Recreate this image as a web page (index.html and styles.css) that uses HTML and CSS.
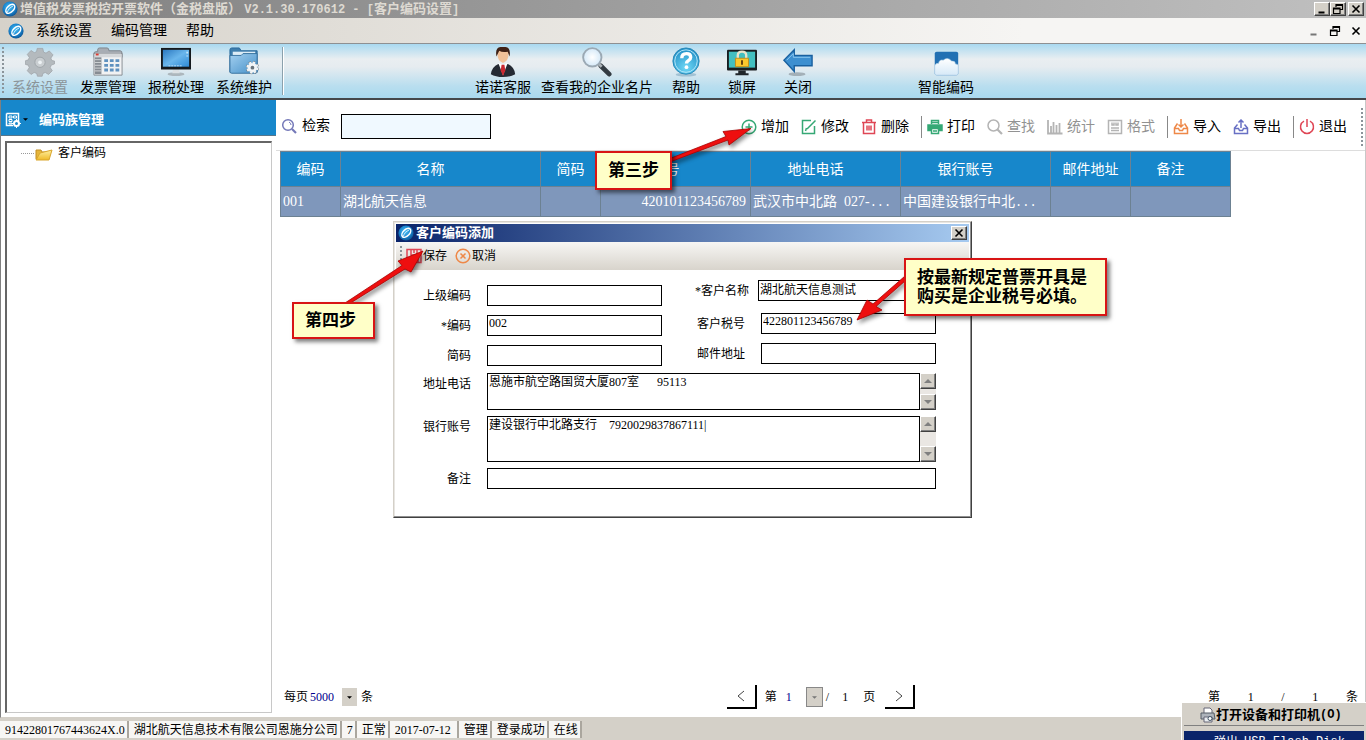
FILE: index.html
```html
<!DOCTYPE html>
<html lang="zh-CN">
<head>
<meta charset="utf-8">
<title>增值税发票税控开票软件（金税盘版）</title>
<link rel="stylesheet" href="styles.css">
</head>
<body>
<svg class="defs" aria-hidden="true">
  <defs>
    <radialGradient id="orb" cx="45%" cy="40%" r="60%"><stop offset="0" stop-color="#4cc0f4"/><stop offset=".6" stop-color="#1a86cf"/><stop offset="1" stop-color="#0f5797"/></radialGradient>
    <radialGradient id="help" cx="50%" cy="75%" r="75%"><stop offset="0" stop-color="#6fd8f6"/><stop offset="1" stop-color="#1e8cc4"/></radialGradient>
    <linearGradient id="screen" x1="0" y1="0" x2="1" y2="1"><stop offset="0" stop-color="#2a78c0"/><stop offset=".5" stop-color="#6ab6ec"/><stop offset="1" stop-color="#2f8ad6"/></linearGradient>
    <linearGradient id="folder" x1="0" y1="0" x2="1" y2="1"><stop offset="0" stop-color="#a4d0f0"/><stop offset="1" stop-color="#4590c8"/></linearGradient>
    <linearGradient id="yellow" x1="0" y1="0" x2="0" y2="1"><stop offset="0" stop-color="#fff0a0"/><stop offset="1" stop-color="#efb928"/></linearGradient>
    <linearGradient id="mist" x1="0" y1="0" x2="0" y2="1"><stop offset="0" stop-color="#fff"/><stop offset="1" stop-color="#d6e9f7"/></linearGradient>
    <radialGradient id="lens"><stop offset="0" stop-color="#fff"/><stop offset="1" stop-color="#d5e9f8"/></radialGradient>
    <symbol id="logo" viewBox="0 0 16 16"><circle cx="8" cy="8" r="7.6" fill="url(#orb)"/><ellipse cx="8.300" cy="7.800" rx="5.400" ry="3.200" transform="rotate(-45 8.300 7.800)" fill="none" stroke="#fff" stroke-width="1.500"/><path d="M5.500 11C6 8.500 8.300 6.300 11 5" fill="none" stroke="#d8f2ff"/></symbol>
    <symbol id="restore" viewBox="0 0 12 12"><path d="M4 1.500h6.500v5H8.500M4 1v3M4 2.500h6.500M1.500 5h6.500v5.500H1.500zM1.500 6h6.500" fill="none" stroke="#000" stroke-width="1.200"/></symbol>
    <symbol id="cross" viewBox="0 0 12 12"><path d="M2.500 2.500l7 7M9.500 2.500l-7 7" stroke="#000" stroke-width="1.600"/></symbol>
    <symbol id="minimize" viewBox="0 0 12 12"><path d="M2.500 9.500h6" stroke="currentColor" stroke-width="2"/></symbol>
    <symbol id="down" viewBox="0 0 8 4"><path d="M0 0h8L4 4z" fill="currentColor"/></symbol>
    <symbol id="up" viewBox="0 0 8 4"><path d="M0 4h8L4 0z" fill="currentColor"/></symbol>
    <symbol id="gear" viewBox="0 0 32 32"><path d="M13 1.500h6l.8 4 2.600 1 3.500-2.300 4 4.200-2.300 3.400 1 2.600 2.900.6v3l-3.500 1.300-1.100 2.700 2.200 3.300-4 4-3.500-2.100-2.500 1-.8 3h-5l-.9-3-2.700-1-3.300 2.100-4-4L4.500 22l-1-2.600-3-.8v-4l3-.9 1.100-2.600-2.200-3.200 4-4.200 3.500 2.300 2.400-1z" fill="#b4babe" stroke="#989ea2" stroke-width=".7"/><circle cx="16" cy="16.300" r="5.500" fill="#c9ced1" stroke="#9da3a7"/><circle cx="16" cy="16.300" r="2" fill="#edf2f4"/></symbol>
  </defs>
</svg>

<div class="app">
  <header class="titlebar">
    <svg class="logo"><use href="#logo"/></svg>
    <h1 class="titlebar-text">增值税发票税控开票软件（金税盘版） <span class="mono">V2.1.30.170612 - [</span>客户编码设置<span class="mono">]</span></h1>
    <div class="win-buttons">
      <button class="bevel" aria-label="最小化"><svg><use href="#minimize"/></svg></button>
      <button class="bevel" aria-label="还原"><svg><use href="#restore"/></svg></button>
      <button class="bevel last" aria-label="关闭"><svg><use href="#cross"/></svg></button>
    </div>
  </header>

  <nav class="menubar">
    <svg class="logo"><use href="#logo"/></svg>
    <button>系统设置</button><button>编码管理</button><button>帮助</button>
    <div class="mdi-buttons">
      <button class="dim" aria-label="最小化子窗口"><svg><use href="#minimize"/></svg></button>
      <button aria-label="还原子窗口"><svg><use href="#restore"/></svg></button>
      <button aria-label="关闭子窗口"><svg><use href="#cross"/></svg></button>
    </div>
  </nav>

  <div class="ribbon">
    <span class="grip"></span>
    <div class="ribbon-group modules">
      <button disabled><svg><use href="#gear"/></svg>系统设置</button>
      <button><svg viewBox="0 0 32 32"><path d="M5 5V3q0-2 2-2h8q2 0 2 3h12q2 0 2 3v4H1V7q0-2 2-2z" fill="#a8adb4" stroke="#7d838b"/><path d="M1 7h30v23H1z" fill="#f1f2f3" stroke="#858a90"/><path d="M2 7h28v4H2z" fill="#d4d7da"/><path d="M3 7h3v2H3z" fill="#dd3b31"/><path d="M2 11h7v18H2z" fill="#878c93"/><path d="M2 13.500h7M2 16.500h7M2 19.500h7M2 22.500h7M2 25.500h7" stroke="#d4d7da"/><path d="M12 13h4v3h-4zm6 0h4v3h-4zm6 0h4v3h-4zM12 18h4v3h-4zm6 0h4v3h-4zm6 0h4v3h-4zM12 23h4v3h-4zm6 0h4v3h-4zm6 0h4v3h-4z" fill="#5f91bf"/></svg>发票管理</button>
      <button><svg viewBox="0 0 32 32"><ellipse cx="16" cy="29" rx="9" ry="2" fill="#adb7bd"/><path d="M13 23h6l1 5h-8z" fill="#dce1e4"/><path d="M0 1h32v23H0z" fill="#15191d"/><path d="M2 3h28v18H2z" fill="url(#screen)"/><path d="M27 5h2v2h-2zM27 9h2v1h-2z" fill="#c5e6fa"/><path d="M8 20h15" stroke="#b6dcf6" stroke-dasharray="2 1"/></svg>报税处理</button>
      <button><svg viewBox="0 0 32 32"><path d="M1 8V3q0-2 2-2h8l2 3h17v23H1z" fill="#3f7ead" stroke="#25669b"/><path d="M4 5h24v5H4z" fill="#dcecf6"/><path d="M1 9h12l2-2h15v19q0 2-2 2H3q-2 0-2-2z" fill="url(#folder)" stroke="#36719e"/><circle cx="25" cy="22" r="5.500" fill="none" stroke="#6d767c" stroke-width="3" stroke-dasharray="2.400 1.900"/><circle cx="25" cy="22" r="4.800" fill="#f2f5f7" stroke="#f2f5f7" stroke-width="1"/><circle cx="25" cy="22" r="5.500" fill="none" stroke="#f2f5f7" stroke-width="2" stroke-dasharray="2.400 1.900"/><circle cx="25" cy="22" r="2" fill="#68737b"/></svg>系统维护</button>
    </div>
    <span class="ribbon-line"></span>
    <div class="ribbon-group service">
      <button><svg viewBox="0 0 32 32"><path d="M10 7q0-7 6-7t6 7q0 8-6 10-6-2-6-10z" fill="#f2c198"/><path d="M9 10Q7-1 16 0q9-1 7 10l-2-5q-6 1-9-1z" fill="#3f2116"/><path d="M3 29q1-8 8-11l5 2 5-2q7 3 8 11-5 3-13 3T3 29z" fill="#252a33"/><path d="M11 17l5 13 5-13-5 2z" fill="#fff"/><path d="M14.500 19h3l1 6-2.500 6-2.500-6z" fill="#c92830"/></svg>诺诺客服</button>
      <button><svg viewBox="0 0 32 32"><path d="M20 20l9 9" stroke="#333b42" stroke-width="5" stroke-linecap="round"/><path d="M17 17l4 4" stroke="#adb4b9" stroke-width="3"/><circle cx="11" cy="11" r="9.800" fill="url(#lens)" stroke="#9ba9b4" stroke-width="2"/></svg>查看我的企业名片</button>
    </div>
    <div class="ribbon-group actions">
      <button><svg viewBox="0 0 32 32"><ellipse cx="16" cy="29.500" rx="11" ry="2" fill="#719eb8" opacity=".5"/><circle cx="16" cy="15" r="14" fill="url(#help)" stroke="#2588b7"/><circle cx="16" cy="15" r="12" fill="none" stroke="#b9e9fa"/><path d="M11.500 12q0-5 5-5 4.500 0 4.500 4 0 2-2.500 3.500-2 1.200-2 3" fill="none" stroke="#fff" stroke-width="3.600"/><circle cx="16.500" cy="21.500" r="2" fill="#fff"/></svg>帮助</button>
      <button><svg viewBox="0 0 32 32"><path d="M12 25h8v3h3v2H9v-2h3z" fill="#20252a"/><rect x="0" y="3" width="32" height="22" rx="1" fill="#181d20"/><path d="M2 5h28v17H2z" fill="#43bfc0"/><path d="M11.500 13V9q0-4 4.500-4t4.500 4v4" fill="none" stroke="#e8e4ca" stroke-width="2.500"/><path d="M9 12h14v9H9z" fill="#fac82d" stroke="#c48b15"/><path d="M15 14h2v5h-2z" fill="#5b3b0e"/></svg>锁屏</button>
      <button><svg viewBox="0 0 32 32"><ellipse cx="15" cy="29" rx="9" ry="2" fill="#8f999f" opacity=".7"/><path d="M1 14L12 3v6h19v11H12v6z" fill="#3d8fd0" stroke="#19609f" stroke-width="1.500"/><path d="M4 14l7-7v4h18" fill="none" stroke="#8cc7f0"/></svg>关闭</button>
    </div>
    <div class="ribbon-group cloud">
      <button><svg viewBox="0 0 32 32"><rect x="4" y="5" width="25" height="25" rx="2" fill="#2270b3"/><path d="M4 28v-8q1-3 4-2.500 1-4.500 5-3.500 5-4 9 1 4-.5 4 3 3 0 3 2v8q0 2-2 2H6q-2 0-2-2z" fill="url(#mist)" stroke="#a9cce4" stroke-width=".6"/></svg>智能编码</button>
    </div>
  </div>

  <div class="workspace">
    <aside class="sidebar">
      <div class="sidebar-head">
        <svg class="book" viewBox="0 0 16 16"><path d="M1.500 1.500h12V9M8 13.500H1.500v-12" fill="none" stroke="#fff" stroke-width="1.500"/><path d="M4 4h3v2H4zm4.500 0h3v2h-3zM4 7.500h3v2H4zM4 11h3v1H4z" fill="none" stroke="#fff"/><circle cx="11.500" cy="11.500" r="2.500" fill="none" stroke="#fff" stroke-width="2"/><path d="M11.500 7v9M7 11.500h9" stroke="#fff" stroke-dasharray="2 5"/></svg>
        <svg class="caret"><use href="#down"/></svg>
        <h2>编码族管理</h2>
      </div>
      <div class="tree">
        <span class="tree-line"></span>
        <svg viewBox="0 0 18 14"><path d="M1 12V3h5l1 2h7v3z" fill="#e5b53b" stroke="#c18e24"/><path d="M1 13L5 6l12-3-3 10z" fill="url(#yellow)" stroke="#d9a62d"/></svg>
        <span>客户编码</span>
      </div>
    </aside>

    <main class="content">
      <div class="toolbar">
        <label class="search"><svg class="icon violet" viewBox="0 0 16 16"><circle cx="7" cy="7" r="5.300"/><path d="M11 11l4 4" stroke-width="2.200"/><path d="M8 4q2 1 2 3" stroke-width="1"/></svg>检索<input type="text" class="search-input"></label>
        <div class="tools">
          <button><svg class="icon green" viewBox="0 0 16 16"><circle cx="8" cy="8" r="6.800"/><path d="M4.500 8h7M8 4.500v7"/></svg>增加</button>
          <button><svg class="icon green" viewBox="0 0 16 16"><path d="M10 1.500H1.500v13h12V7M6 10l8.500-8.500M4.500 12l1-3"/></svg>修改</button>
          <button><svg class="icon red" viewBox="0 0 16 16"><path d="M1 3.500h14M5.500 3V1h5v2M2.500 4v10.500h11V4M6 6.500v5M8 6.500v5M10 6.500v5"/></svg>删除</button>
          <span class="tool-line"></span>
          <button><svg class="icon green" viewBox="0 0 16 16"><path d="M4.500 5V1.500h7V5M4.500 3.500h7"/><path d="M1 6h14v5.500h-3V9H4v2.500H1z" fill="currentColor"/><path d="M4.500 9.500h7v5h-7zM6 12h4"/></svg>打印</button>
          <button disabled><svg class="icon" viewBox="0 0 16 16"><circle cx="6.500" cy="6.500" r="5.500"/><path d="M10.500 10.500l4.500 4.500" stroke-width="2.200"/></svg>查找</button>
          <button disabled><svg class="icon" viewBox="0 0 16 16"><path d="M1 1v13.500h14.500M4 14V7M6.500 14V3M9.500 14V6M12.500 14V4" stroke-width="1.800"/></svg>统计</button>
          <button disabled><svg class="icon" viewBox="0 0 16 16"><path d="M1.500 1.500h13v13h-13zM4 9h8M4 11.500h8M5 3.500V6h2V3.500M9 3.500V6h2V3.500"/></svg>格式</button>
          <span class="tool-line"></span>
          <button><svg class="icon orange" viewBox="0 0 16 16"><path d="M4.500 4.500L1.500 9v5.500h13V9l-3-4.500M1.500 9.500h4l1 2h3l1-2h4M8 0v8M5.500 5.500L8 8l2.500-2.500"/></svg>导入</button>
          <button><svg class="icon blue" viewBox="0 0 16 16"><path d="M4.500 5.500L1.500 9v5.500h13V9l-3-3.500M1.500 9.500h4l1 2h3l1-2h4M8 9V1M5.500 3.500L8 1l2.500 2.500"/></svg>导出</button>
          <span class="tool-line"></span>
          <button><svg class="icon red" viewBox="0 0 16 16"><path d="M5 2.200a6.500 6.500 0 1 0 6 0M8 0v8"/></svg>退出</button>
          <span class="grip"></span>
        </div>
      </div>

      <table class="grid">
        <colgroup><col class="w60"><col class="w200"><col class="w60"><col class="w150"><col class="w150"><col class="w150"><col class="w80"><col class="w100"></colgroup>
        <thead><tr><th>编码</th><th class="sortable">名称</th><th>简码</th><th class="sortable">税号</th><th class="sortable">地址电话</th><th class="sortable">银行账号</th><th>邮件地址</th><th class="sortable">备注</th></tr></thead>
        <tbody><tr><td>001</td><td>湖北航天信息</td><td></td><td class="right">420101123456789</td><td>武汉市中北路&ensp;027-<span class="dots">...</span></td><td>中国建设银行中北<span class="dots">...</span></td><td></td><td></td></tr></tbody>
      </table>

      <footer class="pager">
        <div class="page-size"><label for="size">每页</label><select id="size"><option>5000</option></select><span class="drop"><svg><use href="#down"/></svg></span><span>条</span></div>
        <div class="page-nav">
          <button aria-label="上一页"><svg viewBox="0 0 8 12"><path d="M7 1L1 6l6 5"/></svg></button>
          <label for="page">第</label>
          <select id="page"><option>1</option></select>
          <span class="drop framed"><svg><use href="#down"/></svg></span>
          <span>/</span><span class="total">1</span><span>页</span>
          <button class="next" aria-label="下一页"><svg viewBox="0 0 8 12"><path d="M1 1l6 5-6 5"/></svg></button>
        </div>
        <div class="page-count"><span>第</span><span>1</span><span>/</span><span>1</span><span>条</span></div>
      </footer>
    </main>
  </div>

  <footer class="statusbar">
    <span>91422801767443624X.0</span><span>湖北航天信息技术有限公司恩施分公司</span><span>7</span><span>正常</span><span class="date">2017-07-12</span><span>管理</span><span>登录成功</span><span>在线</span>
  </footer>
</div>

<section class="dialog" role="dialog" aria-labelledby="dlg-title">
  <div class="dialog-title">
    <svg class="logo"><use href="#logo"/></svg>
    <h2 id="dlg-title">客户编码添加</h2>
    <button class="bevel" aria-label="关闭"><svg><use href="#cross"/></svg></button>
  </div>
  <div class="dialog-tools">
    <span class="grip"></span>
    <button><svg class="icon red" viewBox="0 0 16 16"><path d="M1 1.500h14v13H3L1 12zM5 2v5h6V2M8 2v3M4 14v-4h8v4"/></svg>保存</button>
    <button><svg class="icon orange" viewBox="0 0 16 16"><circle cx="8" cy="8" r="6.800"/><path d="M5.500 5.500l5 5M10.500 5.500l-5 5"/></svg>取消</button>
  </div>
  <form class="form">
    <div class="form-columns">
      <div class="form-column">
        <div class="field"><label for="parent">上级编码</label><input id="parent" type="text"></div>
        <div class="field"><label for="code">*编码</label><input id="code" type="text" value="002"></div>
        <div class="field"><label for="short">简码</label><input id="short" type="text"></div>
      </div>
      <div class="form-column second">
        <div class="field name"><label for="name">*客户名称</label><input id="name" type="text" value="湖北航天信息测试"></div>
        <div class="field"><label for="tax">客户税号</label><input id="tax" type="text" value="422801123456789"></div>
        <div class="field"><label for="mail">邮件地址</label><input id="mail" type="text"></div>
      </div>
    </div>
    <div class="field wide">
      <label for="addr">地址电话</label>
      <textarea id="addr" rows="2">恩施市航空路国贸大厦807室&ensp;&ensp;&ensp;95113</textarea>
      <div class="scroll"><button type="button" class="bevel" aria-label="向上"><svg><use href="#up"/></svg></button><button type="button" class="bevel" aria-label="向下"><svg><use href="#down"/></svg></button></div>
    </div>
    <div class="field wide tall">
      <label for="bank">银行账号</label>
      <textarea id="bank" rows="3">建设银行中北路支行&ensp;&ensp;7920029837867111|</textarea>
      <div class="scroll"><button type="button" class="bevel" aria-label="向上"><svg><use href="#up"/></svg></button><button type="button" class="bevel" aria-label="向下"><svg><use href="#down"/></svg></button></div>
    </div>
    <div class="field wide"><label for="note">备注</label><input id="note" type="text"></div>
  </form>
</section>

<svg class="arrows" width="1120" height="340" viewBox="0 0 1120 340" aria-hidden="true">
  <g fill="#ee0f0f" stroke="#a80000" stroke-width=".8">
    <path d="M670 158.500L726 136.500 723 131.500 751 128.500 729 145 728 140 670 162z"/>
    <path d="M345 303L402 265.500 398 261 423 251 411 272 405 269 349 304z"/>
    <path d="M905 276L873 304 867 300 857 320 882 310 876 306.500 905 281z"/>
  </g>
</svg>
<div class="callout step-three">第三步</div>
<div class="callout step-four">第四步</div>
<div class="callout tax-note">按最新规定普票开具是<br>购买是企业税号必填。</div>

<div class="popup">
  <button class="popup-item"><svg viewBox="0 0 16 16"><path d="M4 6V1h6l2 2v3" fill="#fff" stroke="#667"/><path d="M1 6h13l1 6H1z" fill="#aeb4bb" stroke="#555d66"/><path d="M4 10h8v5H4z" fill="#e9edf0" stroke="#667"/><circle cx="10" cy="11.500" r="2" fill="#fff" stroke="#456"/></svg>打开设备和打印机<span class="mono">(O)</span></button>
  <button class="popup-item active">弹出&ensp;<span class="device">USB Flash Disk</span></button>
</div>
</body>
</html>
```
FILE: styles.css
```css
* { box-sizing: border-box; }
body {
  margin: 0;
  height: 100vh;
  overflow: hidden;
  position: relative;
  background: #fff;
  color: #000;
  font: 12px/16px "Liberation Serif", "Noto Sans CJK SC", serif;
}
button, input, select, textarea { font: inherit; color: inherit; }
button { margin: 0; padding: 0; border: 0; background: none; white-space: nowrap; }
input, textarea { border: 1px solid #000; border-radius: 0; background: #fff; }
h1, h2 { margin: 0; }
svg { display: block; flex: none; }
.defs { position: absolute; width: 0; height: 0; }
.mono { font-family: "Liberation Mono", monospace; }
.logo { width: 16px; height: 16px; }
.app { display: flex; flex-direction: column; height: 100%; }

.bevel {
  display: flex;
  align-items: center;
  justify-content: center;
  width: 16px;
  height: 14px;
  background: #d4d0c8;
  border: 1px solid;
  border-color: #fff #404040 #404040 #fff;
  box-shadow: inset -1px -1px #808080;
}
.bevel svg { width: 12px; height: 12px; }

.titlebar {
  display: flex;
  align-items: center;
  gap: 2px;
  height: 18px;
  padding: 0 2px;
  background: linear-gradient(90deg, #808080, #c0c0c0);
}
.titlebar-text { font-size: 13px; line-height: 18px; color: #dedad2; white-space: nowrap; }
.titlebar-text .mono { font-size: 12px; }
.win-buttons { display: flex; margin-left: auto; }
.win-buttons .last { margin-left: 2px; }

.menubar {
  display: flex;
  align-items: center;
  gap: 19px;
  height: 26px;
  padding: 1px 4px 0 8px;
  font-size: 14px;
  background: linear-gradient(90deg, #d6d2ca, #f6f5f3 75%);
  border-bottom: 1px solid #8e9092;
}
.menubar .logo { margin-right: -7px; }
.mdi-buttons { display: flex; gap: 9px; margin-left: auto; }
.mdi-buttons svg { width: 12px; height: 12px; }
.mdi-buttons .dim { color: #777; }

.grip { width: 2px; align-self: stretch; background: repeating-linear-gradient(#8b949a 0 2px, transparent 2px 4px); }
.ribbon {
  display: flex;
  align-items: stretch;
  height: 56px;
  padding: 3px 2px;
  font-size: 14px;
  background: linear-gradient(#a9d9f0, #e9eef1 28%, #e6ecf0 42%, #b9deef 78%, #a9d9ef);
  border-bottom: 2px solid #45484b;
}
.ribbon-group { display: flex; }
.ribbon-group button { display: flex; flex-direction: column; align-items: center; line-height: 20px; }
.ribbon-group svg { width: 30px; height: 30px; margin-bottom: 1px; }
.ribbon-group button:disabled { color: #8b9499; }
.modules { gap: 12px; margin-left: 8px; }
.ribbon-line { width: 2px; margin-left: 10px; background: #8ba1ad; border-right: 1px solid #fff; }
.service { gap: 10px; margin-left: 191px; }
.actions { gap: 26px; margin-left: 18px; }
.cloud { margin-left: 105px; }

.workspace {
  display: flex;
  flex: 1;
  min-height: 0;
  border-left: 1px solid #808080;
  border-bottom: 1px solid #d4d0c8;
}
.sidebar { display: flex; flex-direction: column; width: 275px; flex: none; }
.sidebar-head { display: flex; align-items: center; height: 36px; padding: 4px 4px 0; color: #fff; background: #1787cb; border-bottom: 1px solid #58778c; }
.sidebar-head h2 { margin-left: 11px; font-size: 13px; }
.book { width: 16px; height: 16px; }
.caret { width: 5px; height: 3px; margin-left: 2px; color: #000; }
.tree {
  display: flex;
  flex: 1;
  align-items: flex-start;
  margin: 5px 4px 4px;
  padding: 2px 0 0 14px;
  border: 1px solid #c8c8c8;
  border-top: 2px solid #666;
  border-left: 2px solid #666;
}
.tree-line { width: 13px; height: 9px; border-bottom: 1px dotted #999; }
.tree svg { width: 18px; height: 14px; margin: 2px 5px 0 1px; }

.content { display: flex; flex: 1; flex-direction: column; min-width: 0; border-right: 1px solid #c8c8c8; }
.toolbar {
  display: flex;
  align-items: center;
  height: 51px;
  padding: 2px 2px 0 5px;
  font-size: 14px;
  border-bottom: 1px solid #ddd;
}
.search { display: flex; align-items: center; gap: 5px; }
.search-input { width: 150px; height: 25px; margin-left: 6px; background: #f0f9ff; }
.icon { width: 16px; height: 16px; fill: none; stroke: currentColor; stroke-width: 1.5; color: #b4b4b4; }
.green { color: #35a875; }
.red { color: #df4655; }
.orange { color: #ee8848; }
.blue { color: #6870c4; }
.violet { color: #7478b8; }
.tools { display: flex; align-items: center; gap: 12px; height: 40px; padding-top: 2px; margin-left: auto; }
.tools button { display: flex; align-items: center; gap: 4px; }
.tools button:disabled { color: #929292; }
.tools .grip { margin-left: 2px; }
.tool-line { width: 1px; height: 22px; margin-right: -7px; background: #888; }

.grid { width: 951px; margin-left: 4px; table-layout: fixed; border-collapse: collapse; color: #fff; font-size: 14px; line-height: 20px; white-space: nowrap; }
.grid th, .grid td { border: 1px solid #6c8192; }
.grid th { height: 35px; padding: 2px 0 0; font-weight: 400; background: #1787cb; }
.grid td { height: 30px; padding: 1px 2px 0; background: #7f97bb; overflow: hidden; }
.grid .sortable { padding-right: 20px; }
.grid .right { padding-right: 4px; text-align: right; }
.dots { font-family: "Liberation Mono", monospace; font-size: 12px; }
.w60 { width: 60px; } .w80 { width: 80px; } .w100 { width: 100px; } .w150 { width: 150px; } .w200 { width: 200px; }

.pager { display: grid; grid-template-columns: 1fr auto 1fr; align-items: center; height: 40px; margin-top: auto; padding: 0 7px 0 8px; }
.pager select { appearance: none; padding: 0; border: 0; background: none; color: #00008c; }
.page-size, .page-nav { display: flex; align-items: center; }
.page-size select { width: 32px; margin-left: 2px; }
.drop { display: flex; align-items: center; justify-content: center; width: 15px; height: 18px; background: #d4d0c8; }
.drop svg { width: 5px; height: 3px; }
.page-size .drop { margin-right: 4px; }
.page-nav button { display: flex; align-items: center; justify-content: center; width: 30px; height: 24px; border: solid #000; border-width: 0 2px 2px 0; margin-right: 8px; }
.page-nav button svg { width: 8px; height: 12px; fill: none; stroke: #444; }
.page-nav select { width: 20px; margin-left: 9px; }
.page-nav .framed { width: 17px; height: 20px; margin-right: 3px; border: 1px solid #888; color: #777; }
.page-nav .total { margin: 0 15px 0 13px; }
.page-nav .next { margin: 0 0 0 10px; }
.page-count { display: flex; justify-content: space-between; width: 150px; justify-self: end; }

.statusbar { display: flex; height: 22px; padding: 3px 0 2px; background: #d4d0c8; white-space: nowrap; }
.statusbar span { padding: 1px 2px 0 5px; background: #f7f6f4; border-right: 2px solid #aaa69e; }
.statusbar .date { padding-right: 6px; }

.dialog { position: absolute; left: 393px; top: 221px; width: 579px; padding: 2px; background: #fff; border: 1px solid; border-color: #d4d0c8 #404040 #404040 #d4d0c8; box-shadow: inset -1px -1px #909090, inset 1px 1px #e8e6e2; }
.dialog-title { display: flex; align-items: center; gap: 2px; height: 18px; padding: 0 2px; color: #fff; background: linear-gradient(90deg, #0a246a, #a6caf0); }
.dialog-title h2 { font-size: 13px; }
.dialog-title .bevel { margin-left: auto; }
.dialog-tools { display: flex; align-items: center; gap: 8px; height: 28px; padding: 4px; background: linear-gradient(#f7f6f4, #d8d4cc); }
.dialog-tools .grip { margin-right: -4px; }
.dialog-tools button { display: flex; align-items: center; gap: 1px; }
.form { display: flex; flex-direction: column; gap: 6px; padding: 10px 33px 26px 12px; }
.form-columns { display: flex; justify-content: space-between; padding-bottom: 1px; }
.form-column { display: flex; flex-direction: column; gap: 9px; padding-top: 5px; }
.form-column.second { padding-top: 0; }
.field { display: flex; }
.field label { width: 63px; margin-right: 16px; padding-top: 3px; text-align: right; white-space: nowrap; }
.field input { width: 175px; height: 21px; padding: 0 1px 4px; }
.form-column.second .field { justify-content: flex-end; }
.form-column.second .name { margin-bottom: 3px; }
.form-column.second .name label { margin-right: 9px; }
.form-column.second .name input { width: 178px; }
.wide input { flex: 1; width: auto; }
.wide textarea { flex: 1; height: 37px; padding: 0 1px; resize: none; overflow: hidden; }
.tall textarea { height: 46px; }
.scroll { display: flex; flex-direction: column; justify-content: space-between; background: #eae7e3; }
.scroll .bevel { height: 16px; color: #808080; }
.scroll svg { width: 8px; height: 4px; }

.arrows { position: absolute; left: 0; top: 0; pointer-events: none; filter: drop-shadow(2px 3px 2px rgba(0, 0, 0, .45)); }
.callout { position: absolute; padding: 7px 11px; background: #ffffc8; border: 2px solid #d81414; box-shadow: 3px 3px 4px rgba(0, 0, 0, .5); font-size: 17px; line-height: 21px; font-weight: 700; white-space: nowrap; }
.step-three { left: 595px; top: 151px; }
.step-four { left: 292px; top: 302px; padding: 6px 17px 6px 11px; }
.tax-note { left: 904px; top: 258px; padding: 8px 18px 8px 11px; line-height: 19px; }

.popup { position: absolute; right: 0; bottom: 0; width: 185px; height: 38px; overflow: hidden; padding: 2px 2px 0; background: #d4d0c8; border: 1px solid #fff; border-width: 1px 0 0 1px; }
.popup-item { display: flex; align-items: center; width: 100%; height: 20px; padding-left: 16px; font-size: 13px; font-weight: 700; }
.popup-item svg { width: 16px; height: 16px; }
.popup-item .mono { font-size: 12px; }
.popup-item.active { height: 22px; margin-top: 6px; padding-left: 30px; color: #fff; background: #0a246a; font-size: 12px; font-weight: 400; box-shadow: 0 -5px #d4d0c8, 0 -6px #808080; }
.device { font-family: "Liberation Mono", monospace; }
```
